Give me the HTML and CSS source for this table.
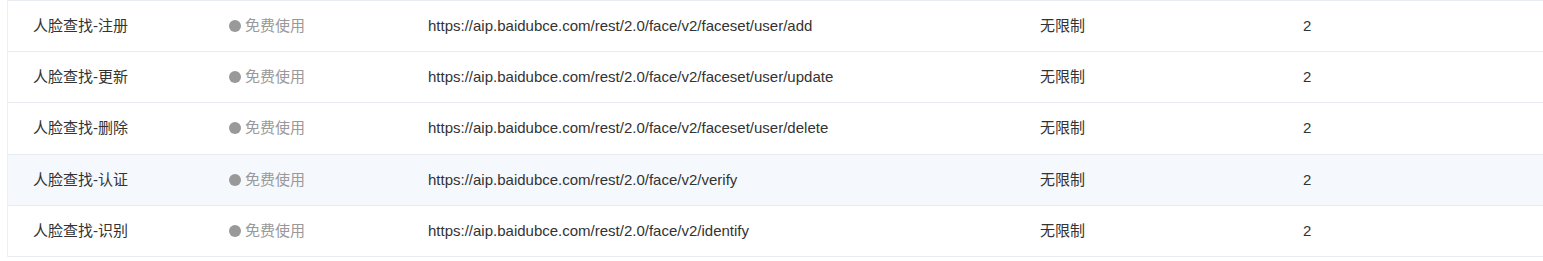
FILE: index.html
```html
<!DOCTYPE html>
<html lang="zh-CN">
<head>
<meta charset="utf-8">
<link rel="stylesheet" href="styles.css">
</head>
<body>
<div class="table">
  <div class="row">
    <div class="cell c1">人脸查找-注册</div>
    <div class="cell c2"><span class="dot"></span>免费使用</div>
    <div class="cell c3">https://aip.baidubce.com/rest/2.0/face/v2/faceset/user/add</div>
    <div class="cell c4">无限制</div>
    <div class="cell c5">2</div>
  </div>
  <div class="row">
    <div class="cell c1">人脸查找-更新</div>
    <div class="cell c2"><span class="dot"></span>免费使用</div>
    <div class="cell c3">https://aip.baidubce.com/rest/2.0/face/v2/faceset/user/update</div>
    <div class="cell c4">无限制</div>
    <div class="cell c5">2</div>
  </div>
  <div class="row">
    <div class="cell c1">人脸查找-删除</div>
    <div class="cell c2"><span class="dot"></span>免费使用</div>
    <div class="cell c3">https://aip.baidubce.com/rest/2.0/face/v2/faceset/user/delete</div>
    <div class="cell c4">无限制</div>
    <div class="cell c5">2</div>
  </div>
  <div class="row hover">
    <div class="cell c1">人脸查找-认证</div>
    <div class="cell c2"><span class="dot"></span>免费使用</div>
    <div class="cell c3">https://aip.baidubce.com/rest/2.0/face/v2/verify</div>
    <div class="cell c4">无限制</div>
    <div class="cell c5">2</div>
  </div>
  <div class="row">
    <div class="cell c1">人脸查找-识别</div>
    <div class="cell c2"><span class="dot"></span>免费使用</div>
    <div class="cell c3">https://aip.baidubce.com/rest/2.0/face/v2/identify</div>
    <div class="cell c4">无限制</div>
    <div class="cell c5">2</div>
  </div>
</div>
</body>
</html>
```

FILE: styles.css
```css
html, body {
  margin: 0;
  padding: 0;
  background: #fff;
}
body {
  padding-left: 7px;
  font-family: "Liberation Sans", "Noto Sans CJK SC", Arial, sans-serif;
  font-size: 15px;
  color: #333;
}
.table {
  border-left: 1px solid #eef0f4;
  border-top: 1px solid #e8ebf2;
  width: 1600px;
}
.row {
  display: flex;
  align-items: center;
  height: 50.2px;
  border-bottom: 1px solid #e8ebf2;
}
.row.hover {
  background: #f5f9fe;
}
.cell {
  box-sizing: border-box;
  padding-left: 25px;
  white-space: nowrap;
  line-height: 20px;
}
.c1 { width: 196px; }
.c2 { width: 199px; color: #999; display: flex; align-items: center; }
.c3 { width: 612px; }
.c4 { width: 263px; }
.c5 { flex: 1; }
.dot {
  width: 12px;
  height: 12px;
  border-radius: 50%;
  background: #999;
  margin-right: 4px;
}
```
